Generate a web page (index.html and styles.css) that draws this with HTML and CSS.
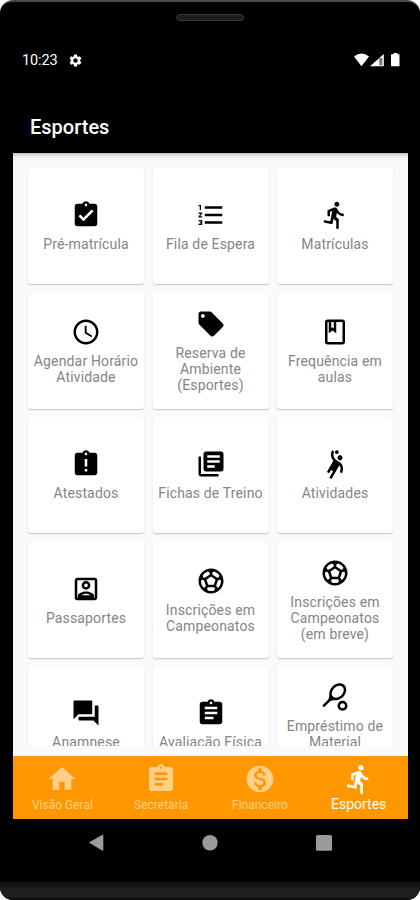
FILE: index.html
```
<!DOCTYPE html>
<html lang="pt-BR">
<head>
<meta charset="utf-8">
<title>Esportes</title>
<link rel="stylesheet" href="styles.css">
</head>
<body>
<svg class="defs" aria-hidden="true">
  <symbol id="run" viewBox="0 0 24 24"><path d="M13.49 5.48c1.1 0 2-.9 2-2s-.9-2-2-2-2 .9-2 2 .9 2 2 2zm-3.6 13.9l1-4.4 2.1 2v6h2v-7.5l-2.1-2 .6-3c1.3 1.5 3.3 2.5 5.5 2.5v-2c-1.9 0-3.5-1-4.3-2.4l-1-1.6c-.4-.6-1-1-1.7-1-.3 0-.5.1-.8.1l-5.2 2.2v4.7h2v-3.4l1.8-.7-1.6 8.1-4.9-1-.4 2 7 1.4z"/></symbol>
  <symbol id="soccer" viewBox="0 0 24 24"><path d="M12 2C6.48 2 2 6.48 2 12s4.48 10 10 10 10-4.48 10-10S17.52 2 12 2zm1 3.3l1.35-.95c1.82.56 3.37 1.76 4.38 3.34l-.39 1.34-1.35.46L13 6.7V5.3zm-3.35-.95L11 5.3v1.4L7.01 9.49l-1.35-.46-.39-1.34c1.01-1.57 2.56-2.77 4.38-3.34zM7.08 17.11l-1.14.1C4.73 15.81 4 13.99 4 12c0-.12.01-.23.02-.35l1-.73 1.38.48 1.46 4.34-.78 1.37zm7.42 2.48c-.79.26-1.63.41-2.5.41s-1.71-.15-2.5-.41l-.69-1.49.64-1.1h5.11l.64 1.11-.7 1.48zM14.27 15H9.73l-1.35-4.02L12 8.44l3.63 2.54L14.27 15zm3.79 2.21l-1.14-.1-.79-1.37 1.46-4.34 1.39-.47 1 .73c.01.11.02.22.02.34 0 1.99-.73 3.81-1.94 5.21z"/></symbol>
  <symbol id="clipboard" viewBox="0 0 24 24"><path d="M19 3h-4.18C14.4 1.84 13.3 1 12 1c-1.3 0-2.4.84-2.82 2H5c-1.1 0-2 .9-2 2v14c0 1.1.9 2 2 2h14c1.1 0 2-.9 2-2V5c0-1.1-.9-2-2-2zm-7 0c.55 0 1 .45 1 1s-.45 1-1 1-1-.45-1-1 .45-1 1-1zm2 14H7v-2h7v2zm3-4H7v-2h10v2zm0-4H7V7h10v2z"/></symbol>
</svg>
<div class="phone">
  <div class="speaker"></div>
  <div class="status">
    <span class="clock">10:23</span>
    <svg class="gear" viewBox="0 0 24 24"><path d="M19.14 12.94c.04-.3.06-.61.06-.94 0-.32-.02-.64-.07-.94l2.03-1.58c.18-.14.23-.41.12-.61l-1.92-3.32c-.12-.22-.37-.29-.59-.22l-2.39.96c-.5-.38-1.03-.7-1.62-.94L14.4 2.81c-.04-.24-.24-.41-.48-.41h-3.84c-.24 0-.43.17-.47.41L9.25 5.35c-.59.24-1.13.57-1.62.94l-2.39-.96c-.22-.08-.47 0-.59.22L2.74 8.87c-.12.21-.08.47.12.61l2.03 1.58c-.05.3-.09.63-.09.94s.02.64.07.94l-2.03 1.58c-.18.14-.23.41-.12.61l1.92 3.32c.12.22.37.29.59.22l2.39-.96c.5.38 1.03.7 1.62.94l.36 2.54c.05.24.24.41.48.41h3.84c.24 0 .44-.17.47-.41l.36-2.54c.59-.24 1.13-.56 1.62-.94l2.39.96c.22.08.47 0 .59-.22l1.92-3.32c.12-.22.07-.47-.12-.61l-2.01-1.58zM12 15.6c-1.98 0-3.6-1.62-3.6-3.6s1.62-3.6 3.6-3.6 3.6 1.62 3.6 3.6-1.62 3.6-3.6 3.6z"/></svg>
    <svg class="signals" viewBox="0 0 46 14"><path d="M0 3.6Q7.5-2.6 15 3.6L7.5 13.3z"/><path d="M16 13.3L29.8 1v12.300z"/><path class="dim" d="M25.300 5h3v7.300h-3z"/><path d="M37.500 1.300h2V0h4v1.300h1.500q.5 0 .5.500v11q0 .5-.5.500h-7.500q-.5 0-.5-.5v-11q0-.5.5-.5z"/></svg>
  </div>
  <header class="appbar"><h1>Esportes</h1></header>
  <main class="content">
    <div class="grid">
      <div class="card"><svg viewBox="0 0 24 24"><path d="M19 3h-4.18C14.4 1.84 13.3 1 12 1c-1.3 0-2.4.84-2.82 2H5c-1.1 0-2 .9-2 2v14c0 1.1.9 2 2 2h14c1.1 0 2-.9 2-2V5c0-1.1-.9-2-2-2zm-7 0c.55 0 1 .45 1 1s-.45 1-1 1-1-.45-1-1 .45-1 1-1zm-2 14l-4-4 1.41-1.41L10 14.17l6.59-6.59L18 9l-8 8z"/></svg><span>Pré-matrícula</span></div>
      <div class="card"><svg viewBox="0 0 24 24"><path d="M2 17h2v.5H3v1h1v.5H2v1h3v-4H2v1zm1-9h1V4H2v1h1v3zm-1 3h1.8L2 13.1v.9h3v-1H3.2L5 10.9V10H2v1zm5-6v2h14V5H7zm0 14h14v-2H7v2zm0-6h14v-2H7v2z"/></svg><span>Fila de Espera</span></div>
      <div class="card"><svg><use href="#run"/></svg><span>Matrículas</span></div>
      <div class="card"><svg viewBox="0 0 24 24"><path d="M11.99 2C6.47 2 2 6.48 2 12s4.47 10 9.99 10C17.52 22 22 17.52 22 12S17.52 2 11.99 2zM12 20c-4.42 0-8-3.58-8-8s3.58-8 8-8 8 3.58 8 8-3.58 8-8 8z"/><path d="M12.5 7H11v6l5.25 3.15.75-1.23-4.5-2.67z"/></svg><span>Agendar Horário<br>Atividade</span></div>
      <div class="card"><svg viewBox="0 0 24 24"><path d="M21.41 11.58l-9-9C12.05 2.22 11.55 2 11 2H4c-1.1 0-2 .9-2 2v7c0 .55.22 1.05.59 1.42l9 9c.36.36.86.58 1.41.58.55 0 1.05-.22 1.41-.59l7-7c.37-.36.59-.86.59-1.41 0-.55-.23-1.06-.59-1.42zM5.5 7C4.67 7 4 6.33 4 5.5S4.67 4 5.5 4 7 4.67 7 5.5 6.33 7 5.5 7z"/></svg><span>Reserva de<br>Ambiente<br>(Esportes)</span></div>
      <div class="card"><svg viewBox="0 0 24 24"><path d="M18 2H6c-1.1 0-2 .9-2 2v16c0 1.1.9 2 2 2h12c1.1 0 2-.9 2-2V4c0-1.1-.9-2-2-2zM9 4h2v5l-1-.75L9 9V4zm9 16H6V4h1v9l3-2.25L13 13V4h5v16z"/></svg><span>Frequência em<br>aulas</span></div>
      <div class="card"><svg viewBox="0 0 24 24"><path d="M19 3h-4.18C14.4 1.84 13.3 1 12 1c-1.3 0-2.4.84-2.82 2H5c-1.1 0-2 .9-2 2v14c0 1.1.9 2 2 2h14c1.1 0 2-.9 2-2V5c0-1.1-.9-2-2-2zm-6 15h-2v-2h2v2zm0-4h-2V8h2v6zm-1-9c-.55 0-1-.45-1-1s.45-1 1-1 1 .45 1 1-.45 1-1 1z"/></svg><span>Atestados</span></div>
      <div class="card"><svg viewBox="0 0 24 24"><path d="M4 6H2v14c0 1.1.9 2 2 2h14v-2H4V6zm16-4H8c-1.1 0-2 .9-2 2v12c0 1.1.9 2 2 2h12c1.1 0 2-.9 2-2V4c0-1.1-.9-2-2-2zm-1 9H9V9h10v2zm-4 4H9v-2h6v2zm4-8H9V5h10v2z"/></svg><span>Fichas de Treino</span></div>
      <div class="card"><svg viewBox="0 0 24 24"><path d="M14.27 6c-.55.95-.22 2.18.73 2.73.95.55 2.18.22 2.73-.73.55-.95.22-2.18-.73-2.73-.95-.55-2.18-.22-2.73.73z"/><path d="M15.84 10.41s-1.63-.94-2.6-1.5c-2.38-1.38-3.2-4.44-1.82-6.82l-1.73-1C8.1 3.83 8.6 7.21 10.66 9.4l-5.15 8.92 1.73 1 1.5-2.6 1.73 1-3 5.2 1.73 1 6.29-10.89c1.14 1.55 1.33 3.69.31 5.46l1.73 1c1.6-2.75 1.28-6.58-1.69-9.08z"/><path d="M12.75 3.8c.72.41 1.63.17 2.05-.55.41-.72.17-1.63-.55-2.05-.72-.41-1.63-.17-2.05.55-.41.72-.17 1.63.55 2.05z"/></svg><span>Atividades</span></div>
      <div class="card"><svg viewBox="0 0 24 24"><path d="M19 5v14H5V5h14m0-2H5c-1.1 0-2 .9-2 2v14c0 1.1.9 2 2 2h14c1.1 0 2-.9 2-2V5c0-1.1-.9-2-2-2zm-7 9.500c-1.930 0-3.500-1.570-3.500-3.500s1.570-3.500 3.500-3.500 3.500 1.570 3.500 3.500-1.570 3.500-3.500 3.500zm0-5c-.83 0-1.500.67-1.500 1.500s.67 1.500 1.500 1.500 1.500-.67 1.500-1.500-.67-1.500-1.500-1.500zm6.500 11.500H5.500v-1.800c0-2 4-3.300 6.500-3.300s6.500 1.300 6.500 3.300V19zm-10.190-2h7.380c-.69-.56-2.380-1.120-3.690-1.120s-3.010.56-3.690 1.120z"/></svg><span>Passaportes</span></div>
      <div class="card"><svg><use href="#soccer"/></svg><span>Inscrições em<br>Campeonatos</span></div>
      <div class="card"><svg><use href="#soccer"/></svg><span>Inscrições em<br>Campeonatos<br>(em breve)</span></div>
      <div class="card"><svg viewBox="0 0 24 24"><path d="M21 6h-2v9H6v2c0 .55.45 1 1 1h11l4 4V7c0-.55-.45-1-1-1zm-4 6V3c0-.55-.45-1-1-1H3c-.55 0-1 .45-1 1v14l4-4h10c.55 0 1-.45 1-1z"/></svg><span>Anamnese</span></div>
      <div class="card"><svg><use href="#clipboard"/></svg><span>Avaliação Física</span></div>
      <div class="card"><svg viewBox="0 0 24 24"><path d="M19.52 2.49c-2.34-2.34-6.62-1.87-9.55 1.06-1.6 1.6-2.52 3.87-2.54 5.46-.02 1.58.26 3.89-1.35 5.5l-4.24 4.24 1.42 1.42 4.24-4.24c1.61-1.61 3.92-1.33 5.5-1.35s3.86-.94 5.46-2.54c2.92-2.93 3.4-7.21 1.06-9.55zm-9.2 9.19c-1.53-1.53-1.05-4.61 1.06-6.72s5.18-2.59 6.72-1.06c1.53 1.53 1.05 4.61-1.06 6.72s-5.18 2.59-6.72 1.06zM18 17c.53 0 1.04.21 1.41.59.78.78.78 2.05 0 2.83-.37.37-.88.58-1.41.58s-1.04-.21-1.41-.59c-.78-.78-.78-2.05 0-2.83.37-.37.88-.58 1.41-.58m0-2c-1.02 0-2.05.39-2.83 1.17-1.56 1.56-1.56 4.09 0 5.66.78.78 1.81 1.17 2.83 1.17s2.05-.39 2.83-1.17c1.56-1.56 1.56-4.09 0-5.66C20.05 15.39 19.02 15 18 15z"/></svg><span>Empréstimo de<br>Material<br>Esportivo</span></div>
    </div>
  </main>
  <nav class="tabs">
    <div class="tab"><svg viewBox="0 0 24 24"><path d="M10 20v-6h4v6h5v-8h3L12 3 2 12h3v8z"/></svg><span>Visão Geral</span></div>
    <div class="tab"><svg viewBox="0 0 24 24"><path d="M19 3h-4.18C14.4 1.84 13.3 1 12 1c-1.3 0-2.4.84-2.82 2H5c-1.1 0-2 .9-2 2v14c0 1.1.9 2 2 2h14c1.1 0 2-.9 2-2V5c0-1.1-.9-2-2-2zm-7-.25c.41 0 .75.34.75.75s-.34.75-.75.75-.75-.34-.75-.75.34-.75.75-.75zM13 17H8c-.55 0-1-.45-1-1s.45-1 1-1h5c.55 0 1 .45 1 1s-.45 1-1 1zm3-4H8c-.55 0-1-.45-1-1s.45-1 1-1h8c.55 0 1 .45 1 1s-.45 1-1 1zm0-4H8c-.55 0-1-.45-1-1s.45-1 1-1h8c.55 0 1 .45 1 1s-.45 1-1 1z"/></svg><span>Secretaria</span></div>
    <div class="tab"><svg viewBox="0 0 24 24"><path d="M12 2C6.48 2 2 6.48 2 12s4.48 10 10 10 10-4.48 10-10S17.52 2 12 2zm1.41 16.09V20h-2.67v-1.93c-1.71-.36-3.160-1.460-3.270-3.400h1.960c.1 1.050.82 1.870 2.650 1.870 1.960 0 2.400-.98 2.400-1.590 0-.83-.44-1.610-2.670-2.140-2.480-.6-4.180-1.620-4.180-3.670 0-1.720 1.390-2.840 3.110-3.210V4h2.670v1.950c1.860.45 2.790 1.860 2.850 3.390H14.300c-.05-1.110-.64-1.870-2.220-1.870-1.500 0-2.400.68-2.400 1.640 0 .84.65 1.390 2.670 1.910s4.180 1.390 4.180 3.910c-.01 1.830-1.380 2.830-3.120 3.160z"/></svg><span>Financeiro</span></div>
    <div class="tab active"><svg><use href="#run"/></svg><span>Esportes</span></div>
  </nav>
  <div class="softkeys">
    <svg viewBox="0 0 16 18"><path d="M.8 8.600L14.500.800q.8-.3.800.7v14.600q0 1-.8.6z"/></svg>
    <svg viewBox="0 0 16 18"><circle cx="8" cy="8.800" r="7.700"/></svg>
    <svg viewBox="0 0 16 18"><rect y=".9" width="16" height="15.800" rx="1.500"/></svg>
  </div>
  <div class="chin"></div>
</div>
</body>
</html>
```
FILE: styles.css
```
* { box-sizing: border-box; }
body { margin: 0; background: #fff; font-family: Roboto, "Liberation Sans", sans-serif; }
svg { display: block; fill: currentColor; }
.defs { position: absolute; width: 0; height: 0; }
.phone {
  width: 420px; height: 900px; overflow: hidden;
  display: flex; flex-direction: column;
  background: #000; border-top: 2px solid #4a4a4a;
  border-radius: 13px 13px 13px 13px;
}
.speaker {
  width: 68px; height: 7px; margin: 12px 0 0 176px; flex: none;
  border-radius: 4px; background: #1d1d1d; border: 1px solid #383838;
}
.status { display: flex; align-items: center; height: 20px; margin: 29px 20px 0 22px; color: #fff; flex: none; }
.clock { font-size: 14.5px; letter-spacing: -.1px; }
.gear { width: 15px; height: 15px; margin-left: 10px; }
.signals { width: 46px; height: 14px; margin-left: auto; }
.signals .dim { fill: #777; }
.appbar { height: 83px; padding: 45px 0 0 30px; flex: none; }
.appbar h1 { margin: 0; color: #fff; font-size: 20px; line-height: 24px; font-weight: 500; }
.content {
  height: 603px; margin: 0 12px 0 13px; padding: 15px 15px 10px; flex: none;
  background: linear-gradient(#bdbdbd, #e8e8e8 3px, #fafafa 8px);
}
.grid {
  display: grid; grid-template-columns: repeat(3, 116px); grid-auto-rows: 116px;
  gap: 8.500px; height: 578px; overflow: hidden; padding: 0 1px; margin: 0 -1px;
}
.card {
  display: flex; flex-direction: column; align-items: center; justify-content: center; gap: 6px;
  background: #fff; border-radius: 3px; color: #000;
  box-shadow: 0 1px 1.500px rgba(0, 0, 0, .22);
}
.card svg { width: 30px; height: 30px; }
.card span { font-size: 14px; line-height: 16px; letter-spacing: .15px; text-align: center; color: #858585; white-space: nowrap; }
.tabs { display: flex; height: 63px; margin: 0 12px 0 13px; background: #ff9800; flex: none; }
.tab {
  flex: 1; display: flex; flex-direction: column; align-items: center;
  padding-top: 7px; color: #ffcf87;
}
.tab svg { width: 32px; height: 32px; }
.tab span { font-size: 12px; line-height: 14px; margin-top: 3px; }
.tab.active { color: #fff; }
.tab.active span { font-size: 14px; line-height: 16px; margin-top: 1px; }
.softkeys { display: flex; justify-content: space-between; height: 62px; padding: 15px 88px 0; color: #9b9b9b; flex: none; }
.softkeys svg { width: 16px; height: 18px; }
.chin { flex: 1; background: linear-gradient(#0c0c0c, #1e1e1e 8px, #202020 15px, #0a0a0a); }
```
